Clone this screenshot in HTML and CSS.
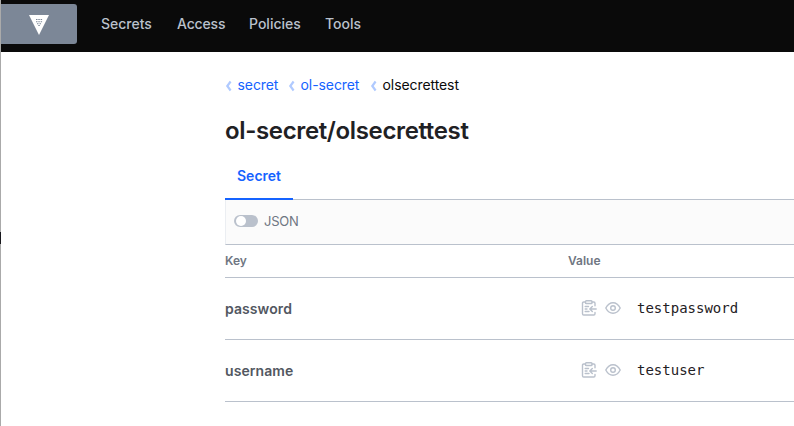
FILE: index.html
```html
<!DOCTYPE html>
<html lang="en">
<head>
<meta charset="utf-8">
<title>ol-secret/olsecrettest</title>
<link rel="stylesheet" href="styles.css">
</head>
<body>
<svg class="defs" aria-hidden="true">
  <symbol id="chevron" viewBox="0 0 7 12"><path d="M5.600 1.500 2.300 6l3.300 4.500" fill="none" stroke="currentColor" stroke-width="2.200"/></symbol>
  <symbol id="copy" viewBox="0 0 16 16"><g fill="none" stroke="currentColor" stroke-width="1.4" stroke-linecap="round" stroke-linejoin="round"><path d="M4.500 2H2.700Q1.500 2 1.500 3.200v10.600Q1.500 15 2.700 15h10.100q1.200 0 1.200-1.200V12.500M14 5.800V3.200Q14 2 12.800 2H11"/><rect x="4.500" y=".8" width="6.500" height="2.700" rx=".8"/><path d="M4.200 6.500H7.500M4.200 9H6M4.200 11.500H8M15.200 9H9M11.300 6.500 8.800 9l2.500 2.500"/></g></symbol>
  <symbol id="eye" viewBox="0 0 16 16"><g fill="none" stroke="currentColor" stroke-width="1.4"><path d="M.8 8C2.600 4.500 5 2.700 8 2.700S13.400 4.500 15.200 8C13.400 11.500 11 13.300 8 13.300S2.600 11.500.8 8Z"/><circle cx="8" cy="8" r="2.300"/></g></symbol>
</svg>
<div class="window">
  <header class="topbar">
    <a class="brand">
      <svg class="logo" viewBox="0 0 20 20"><path d="M0 0h20L10 20Z" fill="#fff"/><path d="M7 4.500h1.500M9.300 4.500h1.500M11.600 4.500h1.500M7 6.700h1.500M9.300 6.700h1.500M11.600 6.700h1.500M8 8.800h1.500M10.500 8.800H12M9.300 10.500h1.500" stroke="#7c8797" stroke-width="1.100"/></svg>
    </a>
    <nav class="menu"><a class="m1">Secrets</a><a class="m2">Access</a><a class="m3">Policies</a><a class="m4">Tools</a></nav>
  </header>
  <main class="content">
    <nav class="crumbs">
      <a class="crumb c1"><svg><use href="#chevron"/></svg><span>secret</span></a>
      <a class="crumb c2"><svg><use href="#chevron"/></svg><span>ol-secret</span></a>
      <a class="crumb current"><svg><use href="#chevron"/></svg><span>olsecrettest</span></a>
    </nav>
    <h1>ol-secret/olsecrettest</h1>
    <div class="tabs"><a class="tab">Secret</a></div>
    <div class="toolbar"><span class="switch"></span><span class="label">JSON</span></div>
    <div class="row head"><span>Key</span><span>Value</span></div>
    <div class="row item"><span class="key">password</span><div class="value"><svg><use href="#copy"/></svg><svg><use href="#eye"/></svg><code>testpassword</code></div></div>
    <div class="row item"><span class="key">username</span><div class="value"><svg><use href="#copy"/></svg><svg><use href="#eye"/></svg><code>testuser</code></div></div>
  </main>
  <i class="edge-mark"></i>
</div>
</body>
</html>
```
FILE: styles.css
```css
* { box-sizing: border-box; }
body { margin: 0; overflow: hidden; background: #fff; font: 14px/20px Inter, "Liberation Sans", sans-serif; white-space: nowrap; }
.defs { position: absolute; width: 0; height: 0; }
.window { position: relative; height: 426px; border-left: 1px solid #aaa; }
.topbar { display: flex; height: 52px; background: #0a0a0a; }
.brand { display: flex; width: 76px; height: 40px; margin-top: 4px; padding: 11px 0 0 28px; background: #7c8797; border-radius: 0 3px 3px 0; }
.logo { width: 20px; height: 20px; }
.menu { display: flex; padding: 14px 0 0 24px; color: #bac1cc; font-weight: 500; }
.m1 { width: 76px; }
.m2 { width: 72px; letter-spacing: -0.15px; }
.m3 { width: 76px; }
.content { padding: 23px 0 0 224px; }
.crumbs { display: flex; height: 20px; }
.crumb { display: flex; align-items: center; color: #1563ff; letter-spacing: -0.08px; }
.crumb svg { width: 7px; height: 12px; margin: 2px 5.5px 0 0; color: #b0caff; }
.c1 { width: 63px; }
.c2 { width: 82px; }
.current { color: #0a0a0a; }
h1 { height: 28px; margin: 22px 0 0; color: #1f2124; font-size: 24px; line-height: 28px; font-weight: 600; letter-spacing: -0.36px; }
.tabs { display: flex; height: 55px; border-bottom: 1px solid #bac1cc; }
.tab { width: 68px; height: 55px; padding: 21px 12px 0; border-bottom: 2px solid #1563ff; color: #1563ff; font-weight: 600; }
.toolbar { display: flex; align-items: center; height: 45px; padding: 0 0 2px 8px; background: #fbfbfb; border-left: 1px solid #ebeef2; border-bottom: 1px solid #bac1cc; }
.switch { width: 24px; height: 12px; margin-top: -1px; padding: 1px 2px; border-radius: 6px; background: #bac1cc; }
.switch::before { content: ""; display: block; width: 10px; height: 10px; border-radius: 50%; background: #fff; }
.label { margin-left: 6px; color: #6f7682; font-size: 13px; letter-spacing: -0.25px; }
.row { display: grid; grid-template-columns: 343px 1fr; align-items: center; border-bottom: 1px solid #bac1cc; }
.head { height: 33px; color: #6f7682; font-size: 12px; font-weight: 600; }
.item { height: 62px; }
.key { color: #525761; font-weight: 600; letter-spacing: 0.08px; }
.value { display: flex; align-items: center; padding: 0 0 2px 13px; }
.value svg { width: 16px; height: 16px; margin-right: 8px; color: #bac1cc; }
code { margin-left: 8px; color: #1f2124; font: 14px/20px "DejaVu Sans Mono", monospace; }
.edge-mark { position: absolute; left: -1px; top: 232px; width: 1px; height: 12px; background: #17171c; }
```
